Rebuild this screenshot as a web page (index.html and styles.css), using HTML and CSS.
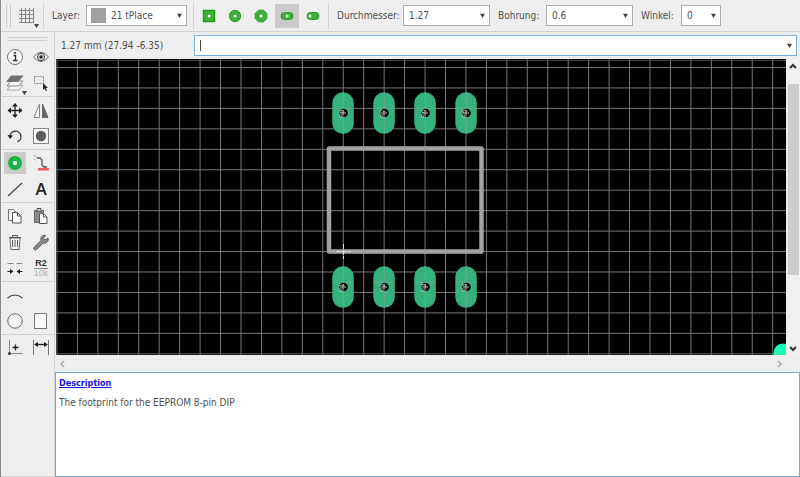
FILE: index.html
```html
<!DOCTYPE html>
<html lang="de">
<head>
<meta charset="utf-8">
<title>Package Editor</title>
<link rel="stylesheet" href="styles.css">
</head>
<body>
<div class="app">
  <header class="toolbar">
    <span class="grip"></span>
    <button class="grid-btn" aria-label="Grid">
      <svg width="24" height="24" viewBox="0 0 24 24"><path d="M6.500 4v15M10.500 4v15M14.500 4v15M18.500 4v15M4 6.500h15M4 10.500h15M4 14.500h15M4 18.500h15" stroke="#858585" fill="none"/><path d="M19 20h5l-2.500 4z" fill="#444"/></svg>
    </button>
    <span class="divider"></span>
    <label class="lbl lbl-layer" for="layer">Layer:</label>
    <span class="combo combo-layer"><span class="swatch"></span><select id="layer"><option>21 tPlace</option></select><svg class="arrow" width="5" height="5" viewBox="0 0 6 6"><path d="M0 1h6L3 6z"/></svg></span>
    <span class="divider"></span>
    <div class="shapes">
      <button class="shape" aria-label="Square"><svg width="16" height="16"><rect x="2.500" y="2.500" width="11" height="11" fill="#42ab3d" stroke="#1da51a" stroke-width="1.500"/><circle cx="8" cy="8" r="1.500" fill="#efffed"/></svg></button>
      <button class="shape" aria-label="Round"><svg width="16" height="16"><circle cx="8" cy="8" r="5.700" fill="#42ab3d" stroke="#1da51a"/><circle cx="8" cy="8" r="1.500" fill="#efffed"/></svg></button>
      <button class="shape" aria-label="Octagon"><svg width="16" height="16"><path d="M5.500 2.200h5L13.800 5.500v5L10.500 13.800h-5L2.200 10.500v-5z" fill="#42ab3d" stroke="#1da51a"/><circle cx="8" cy="8" r="1.500" fill="#efffed"/></svg></button>
      <button class="shape on" aria-label="Long"><svg width="16" height="16"><rect x="2" y="4.500" width="12" height="7" rx="3.500" fill="#42ab3d" stroke="#1da51a"/><circle cx="8" cy="8" r="1.500" fill="#efffed"/></svg></button>
      <button class="shape" aria-label="Offset"><svg width="16" height="16"><rect x="2" y="4.500" width="12" height="7" rx="3.500" fill="#42ab3d" stroke="#1da51a"/><circle cx="5" cy="8" r="1.500" fill="#efffed"/></svg></button>
    </div>
    <span class="divider"></span>
    <label class="lbl lbl-dia" for="dia">Durchmesser:</label>
    <span class="combo combo-size"><select id="dia"><option>1.27</option></select><svg class="arrow" width="5" height="5" viewBox="0 0 6 6"><path d="M0 1h6L3 6z"/></svg></span>
    <label class="lbl lbl-drill" for="drill">Bohrung:</label>
    <span class="combo combo-size"><select id="drill"><option>0.6</option></select><svg class="arrow" width="5" height="5" viewBox="0 0 6 6"><path d="M0 1h6L3 6z"/></svg></span>
    <label class="lbl lbl-angle" for="angle">Winkel:</label>
    <span class="combo combo-angle"><select id="angle"><option>0</option></select><svg class="arrow" width="5" height="5" viewBox="0 0 6 6"><path d="M0 1h6L3 6z"/></svg></span>
  </header>

  <div class="body">
    <nav class="tools">
      <div class="tools-grip"></div>
      <div class="group">
        <button aria-label="Info"><svg width="24" height="24" viewBox="0 0 24 24"><circle cx="12" cy="12" r="7.500" fill="#fafafa" stroke="#777"/><path d="M10.500 10.500h2v5M10 15.500h4.500" fill="none" stroke="#333" stroke-width="1.400"/><circle cx="12" cy="7.800" r="1.100" fill="#333"/></svg></button>
        <button aria-label="Show"><svg width="24" height="24" viewBox="0 0 24 24"><path d="M4.500 12Q12 2.500 19.500 12Q12 21 4.500 12z" fill="#fafafa" stroke="#666"/><circle cx="12" cy="12" r="3.600" fill="#ddd" stroke="#444"/><circle cx="12" cy="12" r="1.700" fill="#222"/></svg></button>
        <button aria-label="Layers"><svg width="24" height="24" viewBox="0 0 24 24"><path d="M4 19l4-5h12l-4 5z" fill="#f6f6f6" stroke="#aaa"/><path d="M4 15l4-5h12l-4 5z" fill="#f6f6f6" stroke="#888"/><path d="M4 10.500l4-5.500h12l-5 5.500z" fill="#707070" stroke="#777"/><path d="M19 20h5l-2.500 4z" fill="#444"/></svg></button>
        <button aria-label="Group"><svg width="24" height="24" viewBox="0 0 24 24"><rect x="5.500" y="5.500" width="9" height="7" fill="none" stroke="#888" stroke-dasharray="2 1"/><path d="M14 12v7l1.500-1.500 1.500 2.500 1-.6-1.300-2.400H19z" fill="#222"/></svg></button>
      </div>
      <div class="group">
        <button aria-label="Move"><svg width="24" height="24" viewBox="0 0 24 24"><path d="M12 6v13M5.500 12.500h13" stroke="#222" stroke-width="1.300"/><path d="M12 5l-3 3.500h6zM12 20l-3-3.500h6zM4.500 12.500L8 9.500v6zM19.500 12.500L16 9.500v6z" fill="#222"/></svg></button>
        <button aria-label="Mirror"><svg width="24" height="24" viewBox="0 0 24 24"><path d="M10.500 6v13.500h-5.500z" fill="#fafafa" stroke="#888"/><path d="M13.500 6v13.500H19z" fill="#666" stroke="#666"/></svg></button>
        <button aria-label="Rotate"><svg width="24" height="24" viewBox="0 0 24 24"><path d="M7 13a5.500 5.500 0 1 1 7.500 4.800" fill="none" stroke="#333" stroke-width="1.300"/><path d="M4.500 11l2.500 4 3-3.500z" fill="#222"/></svg></button>
        <button aria-label="Select"><svg width="24" height="24" viewBox="0 0 24 24"><rect x="4.500" y="4.500" width="15" height="15" fill="#f5f5f5" stroke="#888"/><circle cx="12" cy="12" r="5.200" fill="#5c5c5c"/></svg></button>
      </div>
      <div class="group">
        <button class="on" aria-label="Pad"><svg width="24" height="24" viewBox="0 0 24 24"><circle cx="12" cy="12" r="4.500" fill="#fff" stroke="#18b347" stroke-width="5"/><circle cx="12" cy="12" r="2" fill="#fff"/></svg></button>
        <button aria-label="Smd"><svg width="24" height="24" viewBox="0 0 24 24"><path d="M4.500 4.500c2 0 3 .5 3.500 2.500M4.500 8c1.500 0 2 1 2.500 1.500" fill="none" stroke="#aaa"/><path d="M8 7h3l2 2v5l2 2h3" fill="none" stroke="#555" stroke-width="1.300"/><rect x="9" y="17" width="11" height="2.500" fill="#e8605f"/></svg></button>
        <button aria-label="Line"><svg width="24" height="24" viewBox="0 0 24 24"><path d="M5 19L19 6" stroke="#444" stroke-width="1.200"/></svg></button>
        <button class="letter" aria-label="Text">A</button>
      </div>
      <div class="group">
        <button aria-label="Copy"><svg width="24" height="24" viewBox="0 0 24 24"><path d="M5.500 5.500h5l3 3v8h-8z" fill="#fafafa" stroke="#777"/><path d="M9.500 8.500h5l3.500 3.500v7H9.500z" fill="#fff" stroke="#555"/><path d="M14.500 8.500V12H18" fill="none" stroke="#555"/></svg></button>
        <button aria-label="Paste"><svg width="24" height="24" viewBox="0 0 24 24"><path d="M5.500 6.500h9v12h-9z" fill="#8a8a8a" stroke="#666"/><path d="M8 4.500h4v3H8z" fill="#ccc" stroke="#555"/><path d="M10.500 9.500h4l3.500 3.500v6.500h-7.500z" fill="#fff" stroke="#555"/><path d="M14.500 9.500V13H18" fill="none" stroke="#555"/></svg></button>
        <button aria-label="Delete"><svg width="24" height="24" viewBox="0 0 24 24"><path d="M7 8l.8 11.500h8.400L17 8z" fill="#f7f7f7" stroke="#666"/><path d="M6 7.500h12M9.500 7V5.500h5V7M9.500 10v7M12 10v7M14.500 10v7" fill="none" stroke="#555"/></svg></button>
        <button aria-label="Change"><svg width="24" height="24" viewBox="0 0 24 24"><path d="M5 17.500l7-7c-1-3 1.500-6 4.500-5l-2 3 1.500 1.500 3-2c1 3.500-2 6-4.800 5l-6.700 6.500c-1.500 1.300-3.700-.5-2.500-2z" fill="#8b8b8b" stroke="#555"/></svg></button>
        <button aria-label="Pinswap"><svg width="24" height="24" viewBox="0 0 24 24"><path d="M4.500 7.500h6M13.500 7.500h6" stroke="#888"/><path d="M4.500 15.500h5M14 15.500h5.500" stroke="#222"/><path d="M7 13l3.500 2.500L7 18zM17 13l-3.500 2.500L17 18z" fill="#222"/></svg></button>
        <button class="value" aria-label="Name and value"><span>R2</span><span class="faint">10k</span></button>
      </div>
      <div class="group">
        <button aria-label="Arc"><svg width="24" height="24" viewBox="0 0 24 24"><path d="M4.500 15Q12 9 19.500 15" fill="none" stroke="#444" stroke-width="1.200"/></svg></button>
        <span></span>
        <button aria-label="Circle"><svg width="24" height="24" viewBox="0 0 24 24"><circle cx="12" cy="12" r="7.200" fill="#f8f8f8" stroke="#666"/></svg></button>
        <button aria-label="Rectangle"><svg width="24" height="24" viewBox="0 0 24 24"><rect x="5.500" y="4.500" width="12" height="15" fill="#fafafa" stroke="#777"/></svg></button>
      </div>
      <div class="group">
        <button aria-label="Mark"><svg width="24" height="24" viewBox="0 0 24 24"><path d="M6.500 4v14M6 17.500h13.500" stroke="#888"/><path d="M9.500 11.500h6M12.500 8.500v6" stroke="#222" stroke-width="1.300"/><circle cx="6.500" cy="17.500" r="1.500" fill="#333"/></svg></button>
        <button aria-label="Dimension"><svg width="24" height="24" viewBox="0 0 24 24"><path d="M4.500 4v15M19.500 4v15" stroke="#777"/><path d="M7 8.500h10" stroke="#222" stroke-width="1.400"/><path d="M5 8.500l4-2.500v5zM19 8.500l-4-2.500v5z" fill="#222"/></svg></button>
      </div>
    </nav>

    <main class="work">
      <div class="command">
        <span class="coords">1.27 mm (27.94 -6.35)</span>
        <div class="combo combo-cmd"><input type="text" aria-label="Command"><span class="caret"></span><svg class="arrow" width="5" height="5" viewBox="0 0 6 6"><path d="M0 1h6L3 6z"/></svg></div>
      </div>
      <div class="view">
        <svg class="board" viewBox="56 59 730 296" preserveAspectRatio="xMinYMin slice" role="img" aria-label="Footprint">
          <defs>
            <pattern id="grid" x="76.900" y="67" width="20.450" height="20.450" patternUnits="userSpaceOnUse"><path d="M.5 0v20.450M0 .5h20.450" stroke="#777" stroke-width="1"/></pattern>
            <g id="pad">
              <rect x="-10.700" y="-20.700" width="21.500" height="41.500" rx="10.500" fill="#33b27d"/>
              <path d="M.3-20.700v41.500M-10.700-4.800h21.500" stroke="#6aa890"/>
              <circle r="4.300" cx=".5" fill="#080808"/>
              <path d="M-3 0h6M0-3v6" stroke="#b5b5b5"/>
            </g>
          </defs>
          <rect x="56" y="59" width="760" height="320" fill="#000"/>
          <rect x="56" y="59" width="760" height="320" fill="url(#grid)"/>
          <path d="M56 60.500h730M56 353.500h730" stroke="#444"/>
          <g class="pin">
            <use href="#pad" x="343" y="113"/><use href="#pad" x="384" y="113"/><use href="#pad" x="425" y="113"/><use href="#pad" x="466" y="113"/>
            <use href="#pad" x="343" y="287"/><use href="#pad" x="384" y="287"/><use href="#pad" x="425" y="287"/><use href="#pad" x="466" y="287"/>
            <text transform="translate(344 118) rotate(-90)">P8</text><text transform="translate(385 118) rotate(-90)">P7</text><text transform="translate(426 118) rotate(-90)">P6</text><text transform="translate(467 118) rotate(-90)">P5</text>
            <text transform="translate(344 292) rotate(-90)">P1</text><text transform="translate(385 292) rotate(-90)">P2</text><text transform="translate(426 292) rotate(-90)">P3</text><text transform="translate(467 292) rotate(-90)">P4</text>
          </g>
          <rect x="329" y="148.500" width="152.500" height="103" fill="none" stroke="#a2a2a2" stroke-width="4.500" stroke-linejoin="round"/>
          <path d="M343.500 244v15M336 251.500h15" stroke="#ddd" stroke-dasharray="5 1"/>
          <circle cx="783" cy="353" r="9.500" fill="#1dfbb9"/>
        </svg>
        <div class="vbar"><svg width="8" height="6"><path d="M1 5l3-3 3 3" /></svg><span class="thumb"></span><svg width="8" height="6"><path d="M1 1l3 3 3-3"/></svg></div>
        <div class="hbar"><svg width="6" height="8"><path d="M5 1L2 4l3 3"/></svg><svg width="6" height="8"><path d="M1 1l3 3-3 3"/></svg></div>
      </div>
      <section class="description">
        <a href="#description">Description</a>
        <p>The footprint for the EEPROM 8-pin DIP</p>
      </section>
    </main>
  </div>
</div>
</body>
</html>
```
FILE: styles.css
```css
* { box-sizing: border-box; }
body {
  margin: 0;
  background: #eee;
  color: #505050;
  font: 10px/14px "DejaVu Sans Condensed", "DejaVu Sans", sans-serif;
}
button, select, input { font: inherit; color: inherit; }
button { border: 0; padding: 0; background: none; display: flex; align-items: center; justify-content: center; }
svg { display: block; flex: none; overflow: visible; }

.app { min-height: 100vh; display: flex; flex-direction: column; border-left: 1px solid #8b8b8b; }

.toolbar { display: flex; align-items: center; height: 32px; border-bottom: 1px solid #d2d2d2; }
.grip { width: 5px; height: 24px; margin-left: 5px; border: solid #cfcfcf; border-width: 0 1px; }
.grid-btn { width: 32px; height: 24px; }
.divider { width: 1px; height: 26px; background: #d2d2d2; }
.lbl { padding-left: 8px; white-space: nowrap; }
.lbl-layer { width: 42px; }
.lbl-dia { width: 74px; }
.lbl-drill { width: 56px; }
.lbl-angle { width: 48px; }

.combo { position: relative; display: flex; align-items: center; height: 21px; background: #fff; border: 1px solid #adadad; }
.combo select, .combo input { appearance: none; flex: 1; min-width: 0; height: 100%; border: 0; outline: 0; padding: 0 14px 0 5px; background: none; }
.combo .arrow { position: absolute; right: 4px; top: 7px; fill: #444; pointer-events: none; }
.combo-layer { width: 101px; margin-right: 6px; }
.combo-size { width: 87px; }
.combo-angle { width: 40px; }
.swatch { width: 15px; height: 15px; margin-left: 4px; background: #a0a0a0; }

.shapes { display: flex; gap: 2px; padding: 0 3px; }
.shape { width: 24px; height: 24px; }
.on { background: #cbcbcb; }

.body { flex: 1; display: flex; }
.tools { width: 54px; border-right: 1px solid #d2d2d2; border-bottom: 1px solid #d2d2d2; padding: 5px 1px 0; }
.tools-grip { height: 4px; margin: 0 6px 3px; border: solid #cfcfcf; border-width: 1px 0; }
.group { display: grid; grid-template-columns: 26px 26px; grid-auto-rows: 26px; border-bottom: 1px solid #d2d2d2; }
.group:last-child { border: 0; }
.group button { margin: 2px; }
.letter { font: 600 17px/22px "Open Sans", sans-serif; color: #222; }
.value { flex-direction: column; font: 700 9px/9px "Liberation Sans", sans-serif; color: #333; }
.value .faint { font-weight: 400; color: #b5b5b5; border-top: 1px solid #888; }

.work { flex: 1; min-width: 0; display: flex; flex-direction: column; }
.command { display: flex; align-items: center; height: 27px; padding-right: 3px; }
.coords { width: 139px; padding-left: 6px; white-space: nowrap; }
.combo-cmd { flex: 1; border-color: #79b0e0; }
.caret { position: absolute; left: 5px; top: 4px; width: 1px; height: 11px; background: #444; }

.view { flex: 1 1 313px; display: grid; grid-template: minmax(0, 1fr) 17px / minmax(0, 1fr) 14px; padding-left: 1px; }
.board { width: 100%; height: 100%; overflow: hidden; }
.pin text { font: 7px "Liberation Sans", sans-serif; fill: #bbb; }
.vbar { display: flex; flex-direction: column; align-items: center; padding: 4px 0 3px; background: #f0f0f0; }
.vbar svg { fill: none; stroke: #333; stroke-width: 2; }
.thumb { flex: 0 0 66%; width: 11px; margin: 15px 0 auto; background: #cdcdcd; }
.hbar { display: flex; align-items: center; justify-content: space-between; padding: 0 3px; }
.hbar svg { fill: none; stroke: #aaa; stroke-width: 1.5; }

.description { flex: 0 0 105px; padding: 3px; background: #fff; border: 1px solid #79a9d8; }
.description a { font-size: 9px; font-weight: 700; color: #1111e8; }
.description p { margin: 6px 0 0; }
```
